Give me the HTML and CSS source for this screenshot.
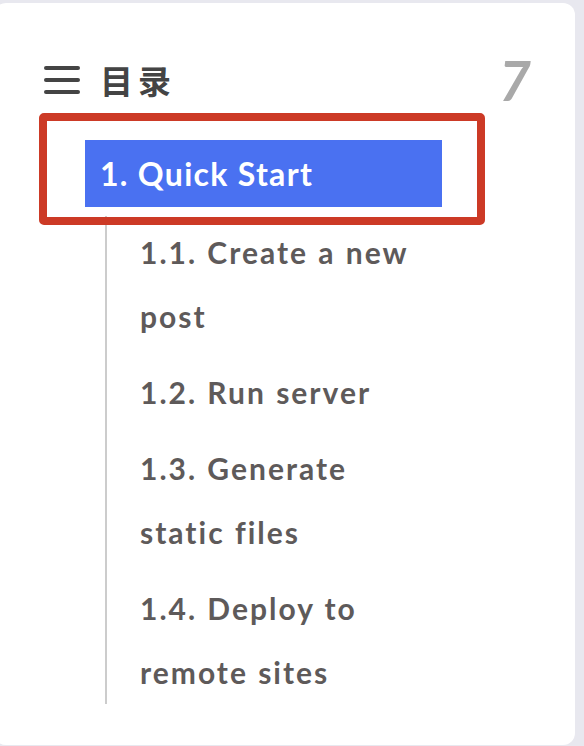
FILE: index.html
```html
<!DOCTYPE html>
<html lang="zh-CN">
<head>
<meta charset="utf-8">
<title>目录</title>
<link rel="stylesheet" href="styles.css">
</head>
<body>
<div class="page">
  <aside class="card">
    <header class="toc-head">
      <div class="toc-title">
        <svg class="toc-icon" width="36" height="28" viewBox="0 0 36 28" aria-hidden="true">
          <line x1="2" y1="2" x2="34" y2="2"/>
          <line x1="2" y1="14" x2="34" y2="14"/>
          <line x1="2" y1="26" x2="34" y2="26"/>
        </svg>
        <span class="toc-label">目录</span>
      </div>
      <span class="toc-count">7</span>
    </header>
    <nav class="toc">
      <div class="toc-active">1. Quick Start</div>
      <ol class="toc-sub">
        <li>1.1. Create a new post</li>
        <li>1.2. Run server</li>
        <li>1.3. Generate static files</li>
        <li>1.4. Deploy to remote sites</li>
      </ol>
    </nav>
  </aside>
</div>
</body>
</html>
```
FILE: styles.css
```css
html, body {
  margin: 0;
  padding: 0;
  background: #e8e8ef;
  overflow: hidden;
}
.page {
  height: 746px;
  padding: 3px 9px 0 0;
  box-sizing: border-box;
}
.card {
  margin-left: -6px;
  height: 742px;
  background: #ffffff;
  border-radius: 12px;
  box-sizing: border-box;
  padding-top: 53px;
  font-family: Lato, "Noto Sans", sans-serif;
}
.toc-head {
  display: flex;
  align-items: center;
  justify-content: space-between;
  height: 48px;
  padding: 0 44px 0 50px;
}
.toc-title {
  display: flex;
  align-items: center;
  gap: 20px;
}
.toc-icon line {
  stroke: #444444;
  stroke-width: 4;
  stroke-linecap: round;
}
.toc-label {
  font-family: "Noto Sans CJK SC", sans-serif;
  font-weight: 700;
  font-size: 33px;
  letter-spacing: 5px;
  color: #444444;
  line-height: 48px;
}
.toc-count {
  font-family: Lato, sans-serif;
  font-style: italic;
  font-weight: 700;
  font-size: 55px;
  color: #a9a9a9;
  line-height: 48px;
}
.toc {
  margin-top: 36px;
}
.toc-active {
  position: relative;
  margin-left: 91px;
  width: 357px;
  height: 67px;
  box-sizing: border-box;
  padding-left: 15px;
  background: #4a71f1;
  color: #ffffff;
  font-weight: 700;
  font-size: 32px;
  letter-spacing: 1.3px;
  line-height: 67px;
}
.toc-active::after {
  content: "";
  position: absolute;
  top: -27px;
  left: -46px;
  right: -43px;
  bottom: -18px;
  border: 8px solid #cc3a26;
  border-radius: 5px;
}
.toc-sub {
  list-style: none;
  margin: 9px 0 0 111px;
  padding: 4px 0 0 33px;
  width: 282px;
  border-left: 2px solid #cccccc;
  display: flex;
  flex-direction: column;
  gap: 12px;
}
.toc-sub li {
  font-weight: 700;
  font-size: 30px;
  letter-spacing: 2px;
  word-spacing: 1px;
  line-height: 64px;
  color: #5e5a5a;
}
```
